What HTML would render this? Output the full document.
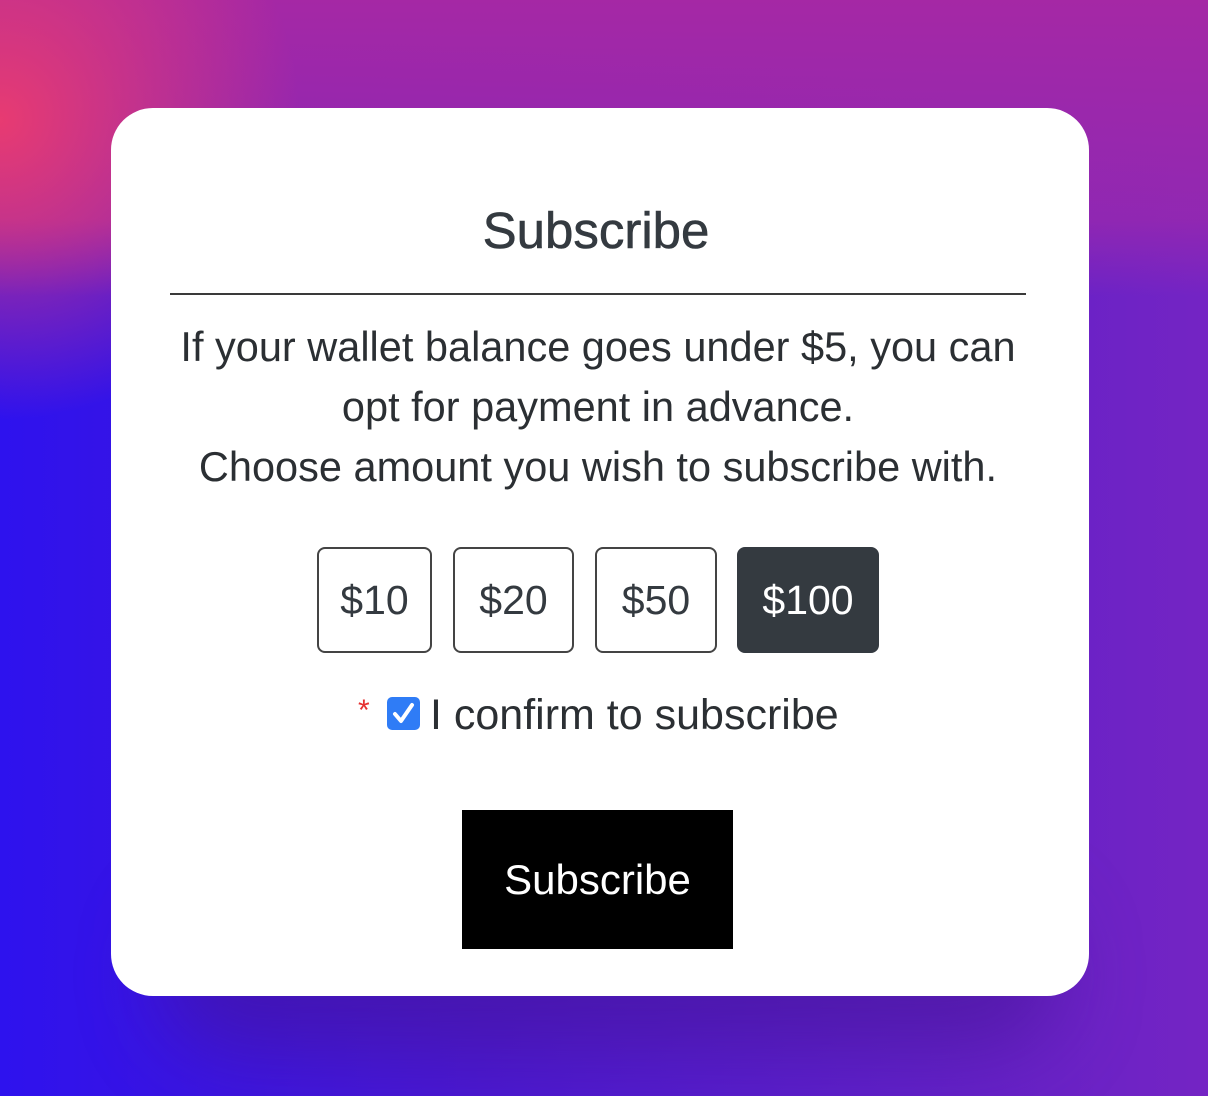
<!DOCTYPE html>
<html><head><meta charset="utf-8"><style>
html,body{margin:0;padding:0}
body{width:1208px;height:1096px;position:relative;overflow:hidden;font-family:"Liberation Sans",sans-serif;
background:
radial-gradient(ellipse 300px 300px at 0px 120px, rgba(236,60,110,0.95), rgba(236,60,110,0) 100%),
linear-gradient(180deg, rgba(165,40,165,1) 0%, rgba(150,40,175,0.85) 20%, rgba(140,40,180,0) 27%),
linear-gradient(90deg,#2e12ee 0%,#4a18d0 40%,#6020c8 75%,#7424c4 100%);}
.shadow{position:absolute;left:160px;top:900px;width:900px;height:150px;border-radius:80px;background:rgba(70,20,150,0.55);filter:blur(40px)}
.card{position:absolute;left:111px;top:108px;width:978px;height:888px;background:#fff;border-radius:42px}
.abs{position:absolute}
.title{left:-8px;width:1208px;top:201px;text-align:center;font-size:51px;color:#343a40;-webkit-text-stroke:0.6px #343a40;line-height:60px}
.rule{left:170px;top:293px;width:856px;height:2px;background:#3a3a3a}
.body{left:-6px;width:1208px;top:317px;text-align:center;font-size:41.5px;line-height:60px;color:#2b2f33}
.amt{top:547px;height:106px;box-sizing:border-box;border:2px solid #444;border-radius:8px;display:flex;align-items:center;justify-content:center;font-size:41px;color:#343a40;background:#fff}
.sel{background:#343a40;border-color:#343a40;color:#fff}
.btn{left:462px;top:810px;width:271px;height:139px;background:#000;color:#fff;font-size:42px;display:flex;align-items:center;justify-content:center}
</style></head><body>
<div class="shadow"></div>
<div class="card"></div>
<div class="abs title">Subscribe</div>
<div class="abs rule"></div>
<div class="abs body">If your wallet balance goes under $5, you can<br>opt for payment in advance.<br>Choose amount you wish to subscribe with.</div>
<div class="abs amt" style="left:317px;width:115px">$10</div>
<div class="abs amt" style="left:453px;width:121px">$20</div>
<div class="abs amt" style="left:595px;width:122px">$50</div>
<div class="abs amt sel" style="left:737px;width:142px">$100</div>
<div class="abs" style="left:358px;top:694px;color:#e53030;font-size:30px">*</div>
<div class="abs" style="left:387px;top:697px;width:33px;height:33px;border-radius:5px;background:#2f7cf6">
<svg width="33" height="33" viewBox="0 0 33 33"><path d="M8 17 L14 24 L25 8" fill="none" stroke="#fff" stroke-width="4" stroke-linecap="round" stroke-linejoin="round"/></svg></div>
<div class="abs" style="left:430px;top:688px;font-size:43px;line-height:54px;color:#2b2f33">I confirm to subscribe</div>
<div class="abs btn">Subscribe</div>
</body></html>
